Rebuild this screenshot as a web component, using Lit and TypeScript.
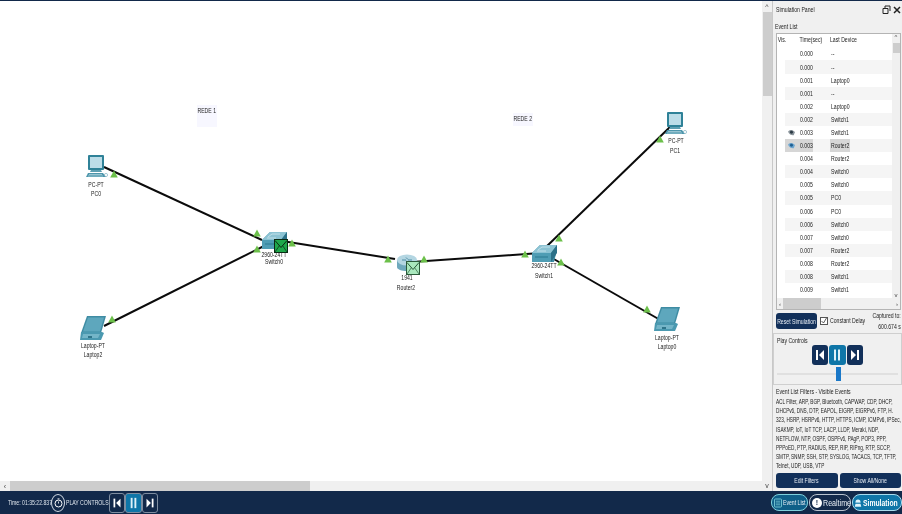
import { LitElement, html, css, svg } from "lit";
import { customElement } from "lit/decorators.js";

const ROWS: [string, string, number?][] = [
  ["0.000", "--"], ["0.000", "--"], ["0.001", "Laptop0"], ["0.001", "--"], ["0.002", "Laptop0"],
  ["0.002", "Switch1"], ["0.003", "Switch1", 1], ["0.003", "Router2", 2], ["0.004", "Router2"],
  ["0.004", "Switch0"], ["0.005", "Switch0"], ["0.005", "PC0"], ["0.006", "PC0"], ["0.006", "Switch0"],
  ["0.007", "Switch0"], ["0.007", "Router2"], ["0.008", "Router2"], ["0.008", "Switch1"], ["0.009", "Switch1"],
];
const LINKS = [
  [104, 167, 262, 240], [104, 326, 264, 246], [282, 241, 395, 259], [412, 262, 540, 253],
  [546, 247, 670, 127], [552, 258, 662, 321],
];
const TRIS = [
  [114, 174], [257, 233], [112, 319], [257, 249], [292, 243], [388, 259], [424, 259], [525, 254],
  [559, 238], [660, 139], [561, 262], [647, 309],
];
const LABELS: [number, number, string][] = [
  [96, 184, "PC-PT"], [96, 192.5, "PC0"], [274, 253.5, "2960-24TT"], [274, 261, "Switch0"],
  [407, 277, "1941"], [406, 286.5, "Router2"], [544, 265, "2960-24TT"], [544, 275, "Switch1"],
  [93, 345, "Laptop-PT"], [93, 354, "Laptop2"], [667, 337, "Laptop-PT"], [667, 345.5, "Laptop0"],
  [676, 140, "PC-PT"], [675, 150, "PC1"],
];
const NOTES: [number, number, number, number, string][] = [
  [197, 105, 20, 22, "REDE 1"], [513, 113, 20, 13, "REDE 2"],
];
const FILTERS = [
  "ACL Filter, ARP, BGP, Bluetooth, CAPWAP, CDP, DHCP,",
  "DHCPv6, DNS, DTP, EAPOL, EIGRP, EIGRPv6, FTP, H.",
  "323, HSRP, HSRPv6, HTTP, HTTPS, ICMP, ICMPv6, IPSec,",
  "ISAKMP, IoT, IoT TCP, LACP, LLDP, Meraki, NDP,",
  "NETFLOW, NTP, OSPF, OSPFv6, PAgP, POP3, PPP,",
  "PPPoED, PTP, RADIUS, REP, RIP, RIPng, RTP, SCCP,",
  "SMTP, SNMP, SSH, STP, SYSLOG, TACACS, TCP, TFTP,",
  "Telnet, UDP, USB, VTP",
];

const pc = (x: number, y: number) => svg`<g transform="translate(${x} ${y})">
  <rect x="2" y="0" width="16" height="15" rx="1" fill="#2f8298"/>
  <rect x="4" y="2" width="12" height="11" fill="#bcdde8"/>
  <path d="M5 15h10l1 2H4z" fill="#5d9fb2"/>
  <path d="M2 18h15l3 4H0z" fill="#4d96ac"/>
  <path d="M3 19.500h13M2 21h15" stroke="#c7e2ea" stroke-width=".6"/>
  <circle cx="20" cy="20" r="1.600" fill="none" stroke="#7fb2c2" stroke-width=".7"/>
</g>`;
const laptop = (x: number, y: number) => svg`<g transform="translate(${x} ${y})">
  <path d="M7 0h19l-5 17H1z" fill="#3f8ca3"/>
  <path d="M8 1.500h16l-4 14H3z" fill="#5ea7bd"/>
  <path d="M1 16h21l2 1-3 7H0z" fill="#4b99b0"/>
  <path d="M3 18h17l-2 4H2z" fill="#74b5c8"/>
  <rect x="8" y="20" width="4" height="2" fill="#2f7489"/>
</g>`;
const sw = (x: number, y: number) => svg`<g transform="translate(${x} ${y})">
  <path d="M0 8 8 0h17l-1 9-2 8H1z" fill="#3f8ea6"/>
  <path d="M0 8 8 0h17l-6 8z" fill="#8cc3d3"/>
  <path d="M19 8l6-8v8l-6 9z" fill="#2b7088"/>
  <path d="M0 8h19v9H0z" fill="#4f9db4"/>
  <path d="M6 5l4-3h8M5 6h9" stroke="#d9edf3" stroke-width=".7" fill="none"/>
  <path d="M3 12h13" stroke="#2d7a91" stroke-width="1"/>
</g>`;
const router = (x: number, y: number) => svg`<g transform="translate(${x} ${y})">
  <path d="M0 6v7c0 2.500 4.500 4 10 4s10-1.500 10-4V6z" fill="#6fa9bd"/>
  <ellipse cx="10" cy="6" rx="10" ry="5.500" fill="#b4d6e2"/>
  <path d="M5 6h4M11 6h4M9 3.500l2 2M11 8.500l-2-2" stroke="#4f8ea5" stroke-width="1" fill="none"/>
</g>`;
const envelope = (x: number, y: number, fill: string, stroke: string) => svg`<g transform="translate(${x} ${y})">
  <rect x=".5" y=".5" width="13" height="13" fill=${fill} stroke=${stroke}/>
  <path d="M1 1.500l6 7 6-7" fill="none" stroke=${stroke} stroke-width="1"/>
  <path d="M1 13l4.500-6.500M13 13 8.500 6.500" fill="none" stroke=${stroke} stroke-width=".7"/>
</g>`;

const prevIcon = svg`<svg viewBox="0 0 16 20" width="16" height="20"><rect x="4" y="5" width="2" height="10" fill="#fff"/><path d="M12 5v10L7 10z" fill="#fff"/></svg>`;
const pauseIcon = svg`<svg viewBox="0 0 16 20" width="16" height="20"><rect x="5" y="4.500" width="2" height="11" fill="#dff1f8"/><rect x="9" y="4.500" width="2" height="11" fill="#dff1f8"/></svg>`;
const nextIcon = svg`<svg viewBox="0 0 16 20" width="16" height="20"><path d="M4 5v10l5-5z" fill="#fff"/><rect x="10" y="5" width="2" height="10" fill="#fff"/></svg>`;
const eye = svg`<svg viewBox="0 0 10 8" width="9" height="7"><path d="M1 3c2-2.500 5-2.500 8 .5L7.500 7C5 7.500 2.500 6 1 3z" fill="#8a949b"/><circle cx="5" cy="3.800" r="1.700" fill="#2b3a44"/></svg>`;
const eyeBlue = svg`<svg viewBox="0 0 10 8" width="9" height="7"><path d="M1 3c2-2.500 5-2.500 8 .5L7.500 7C5 7.500 2.500 6 1 3z" fill="#6ea6cf"/><circle cx="5" cy="3.800" r="1.700" fill="#1f5f92"/></svg>`;

@customElement("app-root")
export class AppRoot extends LitElement {
  static styles = css`
    :host { display: block; width: 902px; height: 514px; overflow: hidden; background: #fff;
      font-family: "Liberation Sans", Arial, sans-serif; color: #222; font-size: 6.5px; filter: blur(.35px); }
    .s, .sl, .sr { display: inline-block; white-space: nowrap; transform: scaleX(.79); }
    .sl { transform-origin: left center; }
    .sr { transform-origin: right center; }
    .top { display: flex; height: 491px; border-top: 1px solid #12294a; box-sizing: border-box; }
    .work { width: 762px; display: flex; flex-direction: column; }
    .canvas { position: relative; flex: 1; background: #fff; overflow: hidden; }
    .canvas svg.d { position: absolute; inset: 0; }
    .lbl { position: absolute; transform: translate(-50%, -50%) scaleX(.79); white-space: nowrap; color: #222; }
    .note { position: absolute; background: #f7f7ff; display: flex; justify-content: center; padding-top: 2px; box-sizing: border-box; }
    .hbar { height: 10px; background: #f0f0f0; display: flex; align-items: center; }
    .hbar .arr { width: 10px; text-align: center; font-size: 7px; color: #444; }
    .hbar .th { width: 300px; height: 100%; background: #cdcdcd; }
    .vbar { width: 10px; background: #f0f0f0; display: flex; flex-direction: column; align-items: center; justify-content: space-between; }
    .vbar .inner { display: flex; flex-direction: column; align-items: center; width: 100%; }
    .vbar .arr { height: 11px; font-size: 7px; color: #444; line-height: 12px; }
    .vbar .th { width: 9px; height: 84px; background: #cdcdcd; }
    .panel { width: 130px; background: #f0f0f0; display: flex; flex-direction: column; border-left: 1px solid #c8c8c8; box-sizing: border-box; }
    .ptitle { height: 20px; display: flex; align-items: center; justify-content: space-between; padding: 0 1px 3px 3px; box-sizing: border-box; }
    .ptitle .ic { display: flex; gap: 2px; align-items: center; }
    .ev { height: 289px; box-sizing: border-box; padding: 0 1px 0 3px; display: flex; flex-direction: column; }
    .gt { height: 12px; display: flex; align-items: center; margin-left: -1px; padding-bottom: 2px; box-sizing: border-box; }
    .tbl { border: 1px solid #b4b4b4; background: #fff; height: 277px; box-sizing: border-box; display: grid; grid-template-columns: 1fr 8px; grid-template-rows: 1fr 11px; overflow: hidden; }
    .list { overflow: hidden; }
    .row { display: grid; grid-template-columns: 8px 13px 16px 16px 1fr; height: 13.1px; align-items: center; }
    .row.head { height: 13.4px; padding-bottom: 2px; box-sizing: border-box; }
    .row.alt { background: linear-gradient(90deg, #fff 8px, #f5f5f5 8px); }
    .row .vh { grid-column: 1 / 3; padding-left: 1px; }
    .row .v { grid-column: 2; display: flex; justify-content: center; height: 100%; align-items: center; }
    .row .t { grid-column: 3 / 5; padding-left: 2px; }
    .row .d { grid-column: 5; }
    .row .v.sel { background: #d6d6d6; }
    .row .t.seltime { height: 100%; background: #d6d6d6; display: flex; align-items: center; width: 15px; box-sizing: border-box; }
    .dev { display: inline-block; width: 20px; padding: 3px 0 3px 1px; box-sizing: border-box; }
    .dev.sel { background: #d6d6d6; }
    .vs { background: #f0f0f0; display: flex; flex-direction: column; justify-content: space-between; align-items: center; font-size: 6px; color: #444; }
    .vs .th { width: 7px; height: 10px; background: #cdcdcd; margin-top: 3px; }
    .vs .top2 { display: flex; flex-direction: column; align-items: center; }
    .hs { grid-column: 1 / 3; background: #f0f0f0; display: flex; align-items: center; justify-content: space-between; padding: 0 2px; font-size: 6px; color: #444; position: relative; }
    .hs .th { position: absolute; left: 6px; width: 38px; top: 0; bottom: 0; background: #cdcdcd; }
    .ctl { display: flex; align-items: flex-start; padding: 3px 1px 0 3px; height: 23px; box-sizing: border-box; }
    .reset { width: 41px; height: 16px; border-radius: 3px; background: #12305a; color: #e8eef5; display: flex; align-items: center; justify-content: center; flex: none; }
    .cb { width: 8px; height: 8px; border: 1px solid #555; margin: 4px 2px 0 3px; background: #fff; flex: none; position: relative; box-sizing: border-box; }
    .cb svg { position: absolute; inset: -1px; }
    .cd { width: 35px; margin-top: 4px; flex: none; }
    .cap { margin-left: auto; margin-top: -2px; text-align: right; line-height: 10.5px; white-space: nowrap; transform: scaleX(.79); transform-origin: right center; flex: none; }
    .play { height: 52px; box-sizing: border-box; padding: 3px 3px; display: flex; flex-direction: column; margin: 0 0 1px 0; border: 1px solid #cfcfcf; }
    .play .btns { display: flex; justify-content: center; gap: 1px; margin-top: 1px; padding-right: 1px; }
    .pb { width: 16px; height: 20px; border-radius: 3px; background: #12305a; display: flex; }
    .pb.on { background: #0f76a8; width: 17px; }
    .slider { position: relative; margin-top: 8px; height: 2px; background: #e0e0e0; }
    .slider i { position: absolute; left: 59px; top: -6px; width: 5px; height: 14px; background: #1a78c8; }
    .flt { flex: 1; padding: 1px 1px 0 3px; display: flex; flex-direction: column; }
    .flt .ft { line-height: 9px; margin-bottom: 1px; height: 9px; }
    .flt p { margin: 0; line-height: 9.2px; height: 74px; width: 126px; }
    .flt p span { display: block; width: 170px; white-space: nowrap; transform: scaleX(.72); transform-origin: left center; }
    .fb { display: flex; gap: 2px; margin-top: 2px; }
    .fb div { flex: 1; height: 15px; border-radius: 3px; background: #12305a; color: #e8eef5; display: flex; align-items: center; justify-content: center; }
    .bot { height: 23px; background: #12294a; display: flex; align-items: center; color: #dfe6ee; position: relative; }
    .time { margin-left: 8px; width: 43px; flex: none; }
    .watch { width: 14px; height: 18px; border: 1px solid #cfd8e2; border-radius: 50%; display: flex; align-items: center; justify-content: center; box-sizing: border-box; flex: none; }
    .pc { margin-left: 1px; width: 43px; flex: none; }
    .bots { display: flex; }
    .bb { width: 16px; height: 20px; border: 1px solid #7e8da0; border-radius: 3px; display: flex; align-items: center; justify-content: center; box-sizing: border-box; }
    .bb.on { background: #0f76a8; width: 17px; }
    .modes { margin-left: auto; display: flex; align-items: center; gap: 1px; height: 100%; }
    .m { height: 17px; border: 1px solid #a9c4d9; border-radius: 8px; display: flex; align-items: center; gap: 1px; box-sizing: border-box; padding: 0 2px; color: #e8eef5; flex: none; }
    .m span.sl { width: 22px; }
    .m.ev2 { width: 37px; background: #0f5f88; border-color: #7fd0dc; padding-left: 2px; }
    .m.rt { width: 42px; font-size: 9px; border-color: #b9c3cf; }
    .m.rt span.sl { width: 29px; }
    .m.si { width: 50px; font-size: 8.600px; font-weight: bold; background: #0f76a8; border-color: #a9dcee; color: #fff; padding-left: 1px; }
    .m.si span.sl { width: 36px; }
    .dot { width: 10px; height: 10px; border-radius: 50%; background: #fff; color: #12294a; font-size: 7px; display: flex; align-items: center; justify-content: center; flex: none; font-weight: bold; }
  `;

  render() {
    return html`
      <div class="top">
        <div class="work">
          <div class="canvas">
            <svg class="d" width="762" height="480" viewBox="0 1 762 480">
              ${LINKS.map(([a, b, c, d]) => svg`<line x1=${a} y1=${b} x2=${c} y2=${d} stroke="#0b0b0b" stroke-width="2"/>`)}
              ${pc(86, 155)} ${pc(665, 112)} ${laptop(80, 316)} ${laptop(654, 307)}
              ${sw(262, 232)} ${sw(532, 245)} ${router(397, 254)}
              ${TRIS.map(([x, y]) => svg`<path d="M${x} ${y - 3.500}l3.800 7h-7.600z" fill="#6cc04a"/>`)}
            </svg>
            ${NOTES.map(([x, y, w, h, t]) => html`<div class="note" style="left:${x}px;top:${y - 1}px;width:${w}px;height:${h}px"><span class="s">${t}</span></div>`)}
            ${LABELS.map(([x, y, t]) => html`<div class="lbl" style="left:${x}px;top:${y - 1}px">${t}</div>`)}
            <svg class="d" width="762" height="480" viewBox="0 1 762 480">
              ${envelope(274, 239, "#1ea84a", "#0a2a14")} ${envelope(406, 261, "#a9e8bd", "#2b5a3a")}
            </svg>
          </div>
          <div class="hbar"><span class="arr">‹</span><div class="th"></div></div>
        </div>
        <div class="vbar">
          <div class="inner"><span class="arr">^</span><div class="th"></div></div>
          <span class="arr">v</span>
        </div>
        <div class="panel">
          <div class="ptitle"><span class="sl">Simulation Panel</span>
            <span class="ic">
              <svg width="9" height="9" viewBox="0 0 9 9"><path d="M3 1h5v5M3 1v2.500M1 3.500h5v5H1z" fill="none" stroke="#222" stroke-width="1"/></svg>
              <svg width="8" height="8" viewBox="0 0 8 8"><path d="M1 1l6 6M7 1 1 7" stroke="#222" stroke-width="1.500"/></svg>
            </span></div>
          <div class="ev">
            <div class="gt"><span class="sl">Event List</span></div>
            <div class="tbl">
              <div class="list">
                <div class="row head"><span class="vh sl">Vis.</span><span class="t sl">Time(sec)</span><span class="d sl">Last Device</span></div>
                ${ROWS.map(([t, d, e], i) => html`
                  <div class="row ${i % 2 ? "alt" : ""}">
                    <span class="v ${e === 2 ? "sel" : ""}">${e === 1 ? eye : e === 2 ? eyeBlue : ""}</span>
                    <span class="t ${e === 2 ? "seltime" : ""}"><span class="sl">${t}</span></span>
                    <span class="d"><span class="dev ${e === 2 ? "sel" : ""}"><span class="sl">${d}</span></span></span>
                  </div>`)}
              </div>
              <div class="vs"><div class="top2"><span>^</span><div class="th"></div></div><span>v</span></div>
              <div class="hs"><span>‹</span><div class="th"></div><span>›</span></div>
            </div>
          </div>
          <div class="ctl">
            <div class="reset"><span class="s">Reset Simulation</span></div>
            <div class="cb"><svg width="8" height="8" viewBox="0 0 8 8"><path d="M1.500 4l2 2 3-5" fill="none" stroke="#333" stroke-width=".8"/></svg></div>
            <span class="cd sl">Constant Delay</span>
            <div class="cap">Captured to:<br />600.674 s</div>
          </div>
          <div class="play">
            <span class="sl">Play Controls</span>
            <div class="btns">
              <div class="pb">${prevIcon}</div><div class="pb on">${pauseIcon}</div><div class="pb">${nextIcon}</div>
            </div>
            <div class="slider"><i></i></div>
          </div>
          <div class="flt">
            <div class="ft"><span class="sl">Event List Filters - Visible Events</span></div>
            <p>${FILTERS.map((l) => html`<span>${l}</span>`)}</p>
            <div class="fb"><div><span class="s">Edit Filters</span></div><div><span class="s">Show All/None</span></div></div>
          </div>
        </div>
      </div>
      <div class="bot">
        <span class="time sl">Time: 01:35:22.837</span>
        <div class="watch"><svg width="9" height="10" viewBox="0 0 9 10"><circle cx="4.500" cy="5.500" r="3.500" fill="none" stroke="#fff" stroke-width="1"/><path d="M3.500 .8h2M4.500 3.500v2" stroke="#fff" stroke-width=".8"/></svg></div>
        <span class="pc sl">PLAY CONTROLS</span>
        <div class="bots"><div class="bb">${prevIcon}</div><div class="bb on">${pauseIcon}</div><div class="bb">${nextIcon}</div></div>
        <div class="modes">
          <div class="m ev2"><svg width="9" height="10" viewBox="0 0 9 10"><rect x=".5" y=".5" width="8" height="9" rx="1" fill="none" stroke="#7fd0dc"/><path d="M2 3h5M2 5h5M2 7h5" stroke="#7fd0dc" stroke-width=".8"/></svg><span class="sl">Event List</span></div>
          <div class="m rt"><div class="dot">!</div><span class="sl">Realtime</span></div>
          <div class="m si"><svg width="11" height="13" viewBox="0 0 11 13"><path d="M2 6a3.500 3.500 0 0 1 7 0z" fill="#dff4fb"/><rect x="2" y="6.500" width="7" height="1" fill="#dff4fb"/><path d="M1 12.500 2 8.500h7l1 4z" fill="#dff4fb"/></svg><span class="sl">Simulation</span></div>
        </div>
      </div>
    `;
  }
}
